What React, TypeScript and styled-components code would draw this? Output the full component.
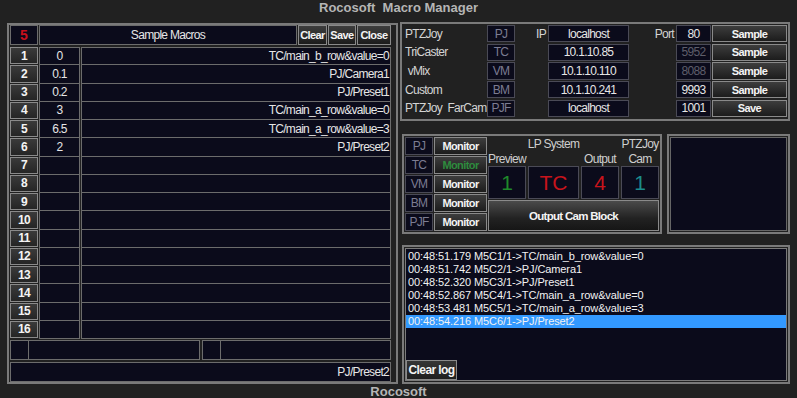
import React from "react";
import styled, { createGlobalStyle, css } from "styled-components";

const SANS = `"Liberation Sans", Arial, sans-serif`;

const BG = "#212121";
const NAVY = "#0b0b1b";
const FRAME = "#7a7a7a";
const CELL_BORDER = "#6c6c6c";
const DIM_BORDER = "#4a4a56";

/* The original uses a condensed face; emulate it with tighter tracking. */
const narrowText = css`
  font: 12px ${SANS};
  letter-spacing: -0.7px;
`;
const narrowBold = css`
  font: bold 11px ${SANS};
  letter-spacing: -0.6px;
`;

type Align = "left" | "center" | "right";
const justify = (a?: Align) =>
  a === "left" ? "flex-start" : a === "right" ? "flex-end" : "center";

const GlobalStyle = createGlobalStyle`
  html, body { margin: 0; padding: 0; background: ${BG}; }
  body { font-family: ${SANS}; }
  *, *::before, *::after { box-sizing: border-box; }
`;

const Window = styled.div`
  width: 797px;
  height: 398px;
  background: ${BG};
  display: flex;
  flex-direction: column;
  overflow: hidden;
`;

const TitleBar = styled.div`
  flex: 0 0 22px;
  line-height: 21px;
  text-align: center;
  font: bold 13px ${SANS};
  color: #b5b5b5;
  white-space: pre;
`;

const Main = styled.div`
  flex: 0 0 362px;
  display: flex;
  align-items: flex-start;
`;

const Footer = styled.div`
  flex: 0 0 14px;
  line-height: 13px;
  text-align: center;
  font: bold 13px ${SANS};
  color: #b5b5b5;
`;

const Frame = styled.div`
  border: 2px solid ${FRAME};
  background: ${BG};
`;

/* ---------- generic cells & buttons ---------- */

const Field = styled.div<{ $align?: Align; $color?: string; $dim?: boolean }>`
  min-width: 0;
  height: 100%;
  display: flex;
  align-items: center;
  justify-content: ${(p) => justify(p.$align)};
  padding: 0 1px;
  background: ${NAVY};
  border: 1px solid ${(p) => (p.$dim ? DIM_BORDER : CELL_BORDER)};
  color: ${(p) => p.$color ?? "#e6e6e6"};
  ${narrowText};
  white-space: pre;
  overflow: hidden;
`;

const DarkButton = styled.button<{ $color?: string }>`
  appearance: none;
  margin: 0;
  padding: 0;
  min-width: 0;
  height: 100%;
  display: flex;
  align-items: center;
  justify-content: center;
  background: linear-gradient(#3d3d3d, #1c1c1c);
  border: 1px solid #8a8a8a;
  color: ${(p) => p.$color ?? "#f4f4f4"};
  ${narrowBold};
  white-space: pre;
  cursor: default;
`;

/* ---------- left macro panel ---------- */

const MacroPanel = styled(Frame)`
  margin: 1px 0 0 7px;
  width: 391px;
  height: 361px;
  padding: 0 5px 0 1px;
  display: flex;
  flex-direction: column;
`;

const HeaderRow = styled.div`
  flex: 0 0 20px;
  margin-bottom: 2px;
  display: grid;
  grid-template-columns: 28px 258px 29px 28px 34px;
  column-gap: 1px;
`;

const CounterCell = styled(Field)`
  font: bold 14px ${SANS};
  letter-spacing: 0;
  color: #c8101c;
`;

const MacroRows = styled.div`
  flex: 0 0 292px;
  margin-bottom: 1px;
  display: grid;
  grid-template-rows: repeat(16, 1fr);
`;

const MacroRow = styled.div`
  min-height: 0;
  display: grid;
  grid-template-columns: 28px 41px 1fr;
  column-gap: 1px;
`;

const RowCell = styled(Field)<{ $first?: boolean }>`
  border-top-width: ${(p) => (p.$first ? 1 : 0)}px;
`;

const NumButton = styled(DarkButton)`
  height: calc(100% - 1px);
  background: linear-gradient(#3a3a3a, #252525);
  font-size: 12px;
`;

const SplitBar = styled.div`
  flex: 0 0 20px;
  margin-bottom: 2px;
  display: flex;
  gap: 2px;
`;

const SplitGroup = styled.div`
  flex: 1;
  display: grid;
  grid-template-columns: 19px 1fr;
`;

const JoinedField = styled(Field)`
  border-left-width: 0;
`;

const StatusField = styled(Field)`
  flex: 0 0 20px;
  height: 20px;
`;

/* ---------- right column ---------- */

const RightColumn = styled.div`
  margin-left: 2px;
  width: 390px;
  height: 362px;
  display: flex;
  flex-direction: column;
`;

const ConnectionPanel = styled(Frame)`
  flex: 0 0 99px;
  padding: 1px 1px 2px 3px;
  display: grid;
  grid-template-rows: repeat(5, 1fr);
  row-gap: 1.5px;
`;

const ConnectionRow = styled.div`
  min-height: 0;
  display: grid;
  grid-template-columns: 82px 28px 33px 81px 47px 35px 1fr;
`;

const RowLabel = styled.div<{ $align?: Align }>`
  display: flex;
  align-items: center;
  justify-content: ${(p) => justify(p.$align)};
  padding-right: ${(p) => (p.$align === "right" ? 2 : 0)}px;
  color: #d4d4d4;
  ${narrowText};
  white-space: pre;
`;

const ActionButton = styled(DarkButton)`
  margin-left: 1px;
`;

const MiddleRow = styled.div`
  flex: 0 0 100px;
  margin: 13px 0 0 2px;
  display: flex;
`;

const MonitorFrame = styled(Frame)`
  width: 260px;
  padding: 1px;
  display: flex;
`;

const MonitorList = styled.div`
  width: 82px;
  display: grid;
  grid-template-columns: 28px 53px;
  grid-template-rows: repeat(5, 1fr);
  column-gap: 1px;
  row-gap: 1.5px;
`;

const LpArea = styled.div`
  flex: 1;
  margin-left: 1px;
  display: flex;
  flex-direction: column;
`;

const LpGrid = styled.div<{ $h: number }>`
  flex: 0 0 ${(p) => p.$h}px;
  display: grid;
  grid-template-columns: 38px 51px 38px 1fr;
  column-gap: 2px;
`;

const LpLabel = styled.div<{ $col: number; $row: number }>`
  grid-column: ${(p) => p.$col};
  grid-row: ${(p) => p.$row};
  display: flex;
  align-items: center;
  justify-content: center;
  color: #cfcfcf;
  ${narrowText};
  white-space: pre;
`;

const BigValue = styled(Field)`
  font: 21px ${SANS};
  letter-spacing: 0;
`;

const OutputButton = styled(DarkButton)`
  flex: 1;
  margin-top: 1px;
  background: linear-gradient(#4a4a4a, #222 60%, #161616);
  font-size: 11.5px;
  letter-spacing: -0.7px;
`;

const PreviewBox = styled(Frame)`
  flex: 1;
  margin-left: 5px;
  padding: 1px;
`;

const PreviewScreen = styled.div`
  height: 100%;
  background: ${NAVY};
  border: 1px solid #666;
`;

const LogPanel = styled(Frame)`
  flex: 1;
  margin: 11px 0 0 2px;
  padding: 1px;
`;

const LogList = styled.div`
  height: 100%;
  background: ${NAVY};
  border: 1px solid #7a7a7a;
  padding-top: 1px;
  display: flex;
  flex-direction: column;
`;

const LogLine = styled.div<{ $selected?: boolean }>`
  flex: 0 0 13px;
  line-height: 13px;
  padding-left: 2px;
  font: 11px ${SANS};
  letter-spacing: -0.1px;
  color: #f2f2f2;
  background: ${(p) => (p.$selected ? "#3399ff" : "transparent")};
  white-space: pre;
`;

const ClearLogButton = styled(DarkButton)`
  margin-top: auto;
  align-self: flex-start;
  width: 51px;
  height: 20px;
  background: linear-gradient(#353535, #1f1f1f);
  font-size: 12px;
`;

/* ---------- data ---------- */

const macros: { v: string; t: string }[] = [
  { v: "0", t: "TC/main_b_row&value=0" },
  { v: "0.1", t: "PJ/Camera1" },
  { v: "0.2", t: "PJ/Preset1" },
  { v: "3", t: "TC/main_a_row&value=0" },
  { v: "6.5", t: "TC/main_a_row&value=3" },
  { v: "2", t: "PJ/Preset2" },
  ...Array.from({ length: 10 }, () => ({ v: "", t: "" })),
];

const devices = [
  { label: "PTZJoy", code: "PJ", ip: "localhost", port: "80", live: true, action: "Sample" },
  { label: "TriCaster", code: "TC", ip: "10.1.10.85", port: "5952", live: false, action: "Sample" },
  { label: " vMix", code: "VM", ip: "10.1.10.110", port: "8088", live: false, action: "Sample" },
  { label: "Custom", code: "BM", ip: "10.1.10.241", port: "9993", live: true, action: "Sample" },
  { label: "PTZJoy  FarCam", code: "PJF", ip: "localhost", port: "1001", live: true, action: "Save" },
];

const monitors = [
  { code: "PJ", active: false },
  { code: "TC", active: true },
  { code: "VM", active: false },
  { code: "BM", active: false },
  { code: "PJF", active: false },
];

const logLines = [
  "00:48:51.179 M5C1/1->TC/main_b_row&value=0",
  "00:48:51.742 M5C2/1->PJ/Camera1",
  "00:48:52.320 M5C3/1->PJ/Preset1",
  "00:48:52.867 M5C4/1->TC/main_a_row&value=0",
  "00:48:53.481 M5C5/1->TC/main_a_row&value=3",
  "00:48:54.216 M5C6/1->PJ/Preset2",
];

const CODE_COLOR = "#7c7c92";

export default function App() {
  return (
    <>
      <GlobalStyle />
      <Window>
        <TitleBar>{"Rocosoft  Macro Manager"}</TitleBar>
        <Main>
          <MacroPanel>
            <HeaderRow>
              <CounterCell>5</CounterCell>
              <Field>Sample Macros</Field>
              <DarkButton>Clear</DarkButton>
              <DarkButton>Save</DarkButton>
              <DarkButton>Close</DarkButton>
            </HeaderRow>
            <MacroRows>
              {macros.map((m, i) => (
                <MacroRow key={i}>
                  <NumButton>{String(i + 1)}</NumButton>
                  <RowCell $first={i === 0}>{m.v}</RowCell>
                  <RowCell $first={i === 0} $align="right">
                    {m.t}
                  </RowCell>
                </MacroRow>
              ))}
            </MacroRows>
            <SplitBar>
              <SplitGroup>
                <Field />
                <JoinedField />
              </SplitGroup>
              <SplitGroup>
                <Field />
                <JoinedField />
              </SplitGroup>
            </SplitBar>
            <StatusField $align="right">PJ/Preset2</StatusField>
          </MacroPanel>

          <RightColumn>
            <ConnectionPanel>
              {devices.map((d, i) => (
                <ConnectionRow key={d.code}>
                  <RowLabel $align="left">{d.label}</RowLabel>
                  <Field $dim $color={CODE_COLOR}>
                    {d.code}
                  </Field>
                  <RowLabel $align="right">{i === 0 ? "IP" : ""}</RowLabel>
                  <Field $dim>{d.ip}</Field>
                  <RowLabel $align="right">{i === 0 ? "Port" : ""}</RowLabel>
                  <Field $dim $color={d.live ? "#e6e6e6" : "#5e5e6a"}>
                    {d.port}
                  </Field>
                  <ActionButton>{d.action}</ActionButton>
                </ConnectionRow>
              ))}
            </ConnectionPanel>

            <MiddleRow>
              <MonitorFrame>
                <MonitorList>
                  {monitors.map((m) => (
                    <React.Fragment key={m.code}>
                      <Field $dim $color={CODE_COLOR}>
                        {m.code}
                      </Field>
                      <DarkButton $color={m.active ? "#2e8b3e" : undefined}>Monitor</DarkButton>
                    </React.Fragment>
                  ))}
                </MonitorList>
                <LpArea>
                  <LpGrid $h={29}>
                    <LpLabel $col={2} $row={1}>LP System</LpLabel>
                    <LpLabel $col={4} $row={1}>PTZJoy</LpLabel>
                    <LpLabel $col={1} $row={2}>Preview</LpLabel>
                    <LpLabel $col={3} $row={2}>Output</LpLabel>
                    <LpLabel $col={4} $row={2}>Cam</LpLabel>
                  </LpGrid>
                  <LpGrid $h={33}>
                    <BigValue $dim $color="#1f8a2a">1</BigValue>
                    <BigValue $dim $color="#c8141c">TC</BigValue>
                    <BigValue $dim $color="#c8141c">4</BigValue>
                    <BigValue $dim $color="#1c8c8c">1</BigValue>
                  </LpGrid>
                  <OutputButton>Output Cam Block</OutputButton>
                </LpArea>
              </MonitorFrame>
              <PreviewBox>
                <PreviewScreen />
              </PreviewBox>
            </MiddleRow>

            <LogPanel>
              <LogList>
                {logLines.map((l, i) => (
                  <LogLine key={i} $selected={i === logLines.length - 1}>
                    {l}
                  </LogLine>
                ))}
                <ClearLogButton>Clear log</ClearLogButton>
              </LogList>
            </LogPanel>
          </RightColumn>
        </Main>
        <Footer>Rocosoft</Footer>
      </Window>
    </>
  );
}
